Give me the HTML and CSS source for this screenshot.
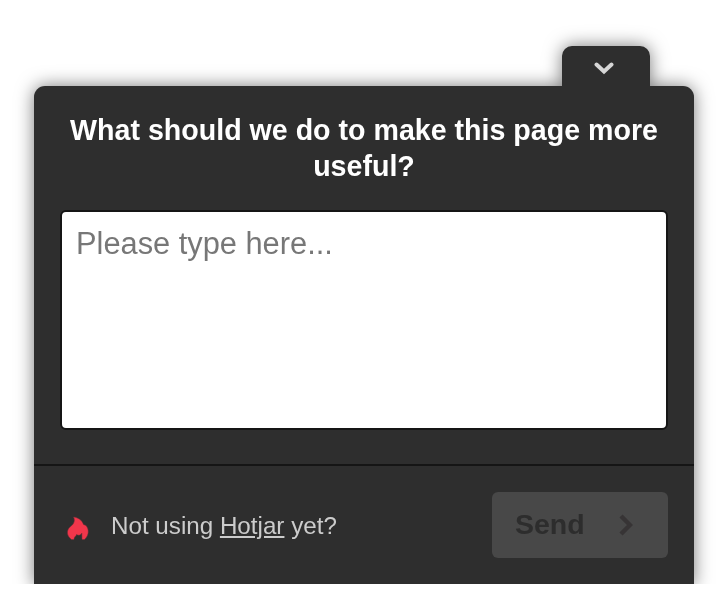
FILE: index.html
```html
<!DOCTYPE html>
<html lang="en">
<head>
    <meta charset="UTF-8">
    <meta name="viewport" content="width=device-width, initial-scale=1.0">
    <title>Feedback</title>
    <link rel="stylesheet" href="styles.css">
</head>
<body>
    <div class="viewport">
        <div class="widget">
            <button class="toggle" aria-label="Minimize">
                <svg width="20" height="16" viewBox="0 0 20 16">
                    <path d="M2.5 3.500 L10 10.500 L17.5 3.500" fill="none" stroke="#d6d6d6" stroke-width="4" stroke-linecap="round"/>
                </svg>
            </button>
            <form class="panel">
                <div class="content">
                    <h1 class="question">What should we do to make this page more useful?</h1>
                    <textarea class="answer" placeholder="Please type here..."></textarea>
                </div>
                <div class="footer">
                    <svg class="flame" width="24" height="26" viewBox="0 0 24 26">
                        <path d="M7.500 1 C12 1.500 16 4 17.500 8.500 L20 9.500 C23 13 23.500 19 18.500 23.500 L16 23.500 L15.800 17 C15 19 13 20 10.500 18.500 C10.500 20 8 20.500 8 23.500 L5.500 23.500 C0.500 20 0.500 14.500 3.500 11.500 C6.500 9 10 6 7.500 1 Z" fill="#f2364b" stroke="#6b2f36" stroke-width="0.5"/>
                    </svg>
                    <p class="credit">Not using <a href="#">Hotjar</a> yet?</p>
                    <button class="send" type="button" disabled>
                        <span class="send-label">Send</span>
                        <svg width="14" height="22" viewBox="0 0 14 22">
                            <path d="M2 2 L11 11 L2 20" fill="none" stroke="#373435" stroke-width="4.4"/>
                        </svg>
                    </button>
                </div>
            </form>
        </div>
    </div>
</body>
</html>
```
FILE: styles.css
```css
body {
    margin: 0;
    background: #fff;
    font-family: Arial, "Liberation Sans", sans-serif;
}
.viewport {
    box-sizing: border-box;
    height: 584px;
    padding: 46px 34px 0;
    overflow: hidden;
}
.widget {
    display: flex;
    flex-direction: column;
    filter: drop-shadow(0 0 9px rgba(0, 0, 0, 0.52));
}
.toggle {
    align-self: flex-end;
    display: flex;
    justify-content: center;
    width: 88px;
    height: 40px;
    margin-right: 44px;
    padding: 15px 4px 0 0;
    border: none;
    border-radius: 10px 10px 0 0;
    background: #2e2e2e;
    cursor: pointer;
}
.panel {
    height: 500px;
    border-radius: 11px 11px 0 0;
    background: #2e2e2e;
}
.content {
    box-sizing: border-box;
    height: 380px;
    padding: 26px 26px 0;
    border-bottom: 2px solid #151515;
}
.question {
    margin: 0 0 26px;
    color: #fff;
    font-size: 28.6px;
    line-height: 36px;
    text-align: center;
}
.answer {
    display: block;
    box-sizing: border-box;
    width: 100%;
    height: 220px;
    padding: 14px;
    border: 2px solid #151515;
    border-radius: 6px;
    background: #fff;
    font-family: inherit;
    font-size: 30.8px;
    line-height: 36px;
    resize: none;
}
.answer::placeholder {
    color: #777;
}
.footer {
    display: flex;
    align-items: center;
    padding: 26px 26px 0 32px;
}
.flame {
    margin-top: 8px;
}
.credit {
    margin: 2px 0 0 21px;
    color: #ccc;
    font-size: 24.2px;
}
.credit a {
    color: inherit;
}
.send {
    display: flex;
    align-items: center;
    gap: 34px;
    width: 176px;
    height: 66px;
    margin-left: auto;
    padding: 0 0 0 23px;
    border: none;
    border-radius: 6px;
    background: #484848;
    color: #2d2d2d;
    font-family: inherit;
    font-size: 28.5px;
    font-weight: bold;
}
.send-label {
    padding-bottom: 2px;
}
```
